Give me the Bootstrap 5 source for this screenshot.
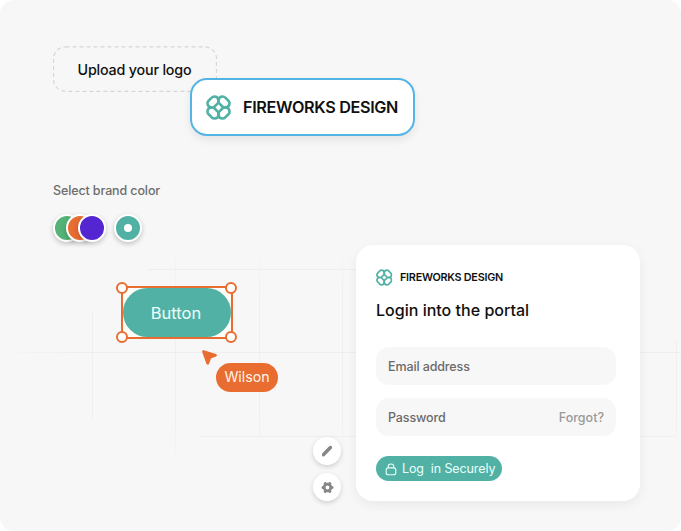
<!DOCTYPE html>
<html lang="en">
<head>
<meta charset="utf-8">
<meta name="viewport" content="width=device-width, initial-scale=1">
<title>Brand portal</title>
<link href="https://cdn.jsdelivr.net/npm/bootstrap@5.3.0/dist/css/bootstrap.min.css" rel="stylesheet">
<style>
  :root { --teal: #52b1a5; --orange: #e96c31; }
  body { font-family: Inter, "Liberation Sans", sans-serif; color: #101010; background: #fff; }
  .stage { width: 681px; height: 531px; background: #f7f7f7; border-radius: 14px; }
  .grid-lines { position: absolute; inset: 0; }
  .side { width: 303px; padding: 46px 0 0 53px; }
  .upload { width: 164px; height: 46px; }
  .upload-box { font-size: 14.3px; letter-spacing: -.18px; font-weight: 500; padding: 1px 1px 0 0; }
  .upload-box svg { position: absolute; inset: 0; }
  .brand-chip { position: absolute; left: 137px; top: 32px; width: 225px; height: 58px; border: 2px solid #54b4e6; border-radius: 17px; box-shadow: 0 4px 9px rgba(0,0,0,.08); padding-left: 14px; gap: 12px; font-size: 16.2px; letter-spacing: -.33px; font-weight: 600; }
  .pick-label { font-size: 12.5px; letter-spacing: -.12px; line-height: 18px; font-weight: 500; color: #6d6d6d; margin-top: 90px; }
  .swatches { margin-top: 14px; }
  .swatch { width: 28px; height: 28px; border: 2.5px solid #fff; border-radius: 50%; box-shadow: 0 2px 5px rgba(0,0,0,.22); }
  .swatch + .swatch { margin-left: -15.5px; }
  .swatch + .swatch.picked { margin-left: 8px; background: var(--teal); }
  .picked i { width: 8px; height: 8px; border-radius: 50%; background: #fff; }
  .node { position: absolute; }
  .frame { left: 121px; top: 286px; width: 112px; height: 53px; border: 2px solid var(--orange); background: #fcfdf6; }
  .frame .pill { height: 49px; border-radius: 25px; background: var(--teal); color: #effffc; font-size: 16.5px; padding: 2px 2px 0 0; }
  .handle { position: absolute; width: 12px; height: 12px; border: 2px solid var(--orange); border-radius: 50%; background: #fff; }
  .h-tl { left: -7px; top: -6px; } .h-tr { right: -6px; top: -6px; }
  .h-bl { left: -7px; bottom: -6px; } .h-br { right: -6px; bottom: -6px; }
  .cursor { left: 200px; top: 348px; }
  .user { left: 216px; top: 363px; width: 62px; height: 29px; border-radius: 15px; background: var(--orange); color: #fff5e6; font-size: 14.2px; padding-bottom: 1px; }
  .tools { left: 313px; top: 437px; gap: 8px; }
  .tool { width: 28px; height: 28px; border-radius: 50%; background: #fff; box-shadow: 0 2px 5px rgba(0,0,0,.16); color: #868686; }
  .login { width: 284px; height: 256px; border-radius: 17px; padding: 23px 24px 0 20px; margin: 0 41px 30px 0; box-shadow: 0 4px 12px rgba(0,0,0,.06); }
  .login-brand { gap: 7.5px; height: 18px; font-size: 10.8px; letter-spacing: -.25px; font-weight: 600; }
  .login-brand span { padding-top: 2px; }
  .login-title { font-size: 16.05px; line-height: 22px; font-weight: 500; margin: 13px 0 26px; }
  .field { height: 38px; border-radius: 13px; background: #f7f7f7; padding: 2px 12px 0; font-size: 12.5px; letter-spacing: -.12px; font-weight: 500; color: #6a6a6a; }
  .field + .field { margin-top: 13px; }
  .field a { color: #999; letter-spacing: 0; }
  .secure { width: 126px; height: 25px; border-radius: 13px; background: var(--teal); color: #eafffb; font-size: 12.5px; letter-spacing: -.1px; margin-top: 20px; padding: 1px 0 0 9px; gap: 5px; white-space: pre; }
</style>
</head>
<body>
<svg class="d-none">
  <symbol id="bloom" viewBox="0 0 24 24">
    <g fill="none" stroke="#52b1a5" stroke-width="2.500" stroke-linejoin="round">
      <path id="petal" d="M12 7.300 7.300 12H5Q1.400 11.600 1.400 8 1.400 6.600 2.500 5.500L5.500 2.500Q6.600 1.400 8 1.400 11.600 1.400 12 5Z"/>
      <use href="#petal" transform="rotate(90 12 12)"/>
      <use href="#petal" transform="rotate(180 12 12)"/>
      <use href="#petal" transform="rotate(270 12 12)"/>
    </g>
  </symbol>
</svg>
<main class="stage position-relative overflow-hidden d-flex justify-content-between align-items-end">
  <svg class="grid-lines" width="681" height="531" aria-hidden="true">
    <defs>
      <linearGradient id="fx" gradientUnits="userSpaceOnUse" x1="0" x2="681" y1="0" y2="0"><stop offset="0" stop-color="#eee" stop-opacity="0"/><stop offset=".12" stop-color="#eee"/><stop offset="1" stop-color="#eee"/></linearGradient>
      <linearGradient id="fy" gradientUnits="userSpaceOnUse" x1="0" x2="0" y1="240" y2="470"><stop offset="0" stop-color="#efefef" stop-opacity="0"/><stop offset=".25" stop-color="#efefef"/><stop offset=".75" stop-color="#efefef"/><stop offset="1" stop-color="#efefef" stop-opacity="0"/></linearGradient>
    </defs>
    <path d="M148 269.5H357M5 352.5H681M200 436.5H357M640 436.5H675" stroke="url(#fx)"/>
    <path d="M92.500 312V418M175.500 250V468M259.500 243V436M342.500 240V470M676.500 340V440" stroke="url(#fy)"/>
  </svg>

  <section class="side position-relative align-self-start">
    <div class="upload position-relative">
      <div class="upload-box h-100 d-flex align-items-center justify-content-center">
        <svg width="164" height="46"><rect x=".5" y=".8" width="163" height="44.500" rx="12" fill="none" stroke="#d6d6d6" stroke-width="1.200" stroke-dasharray="4 3"/></svg>
        <span>Upload your logo</span>
      </div>
      <div class="brand-chip bg-white d-flex align-items-center">
        <svg width="25" height="25"><use href="#bloom"/></svg>
        <span class="text-nowrap">FIREWORKS DESIGN</span>
      </div>
    </div>
    <div class="pick-label">Select brand color</div>
    <div class="swatches d-flex">
      <span class="swatch" style="background:#55b378"></span>
      <span class="swatch" style="background:#e96c31"></span>
      <span class="swatch" style="background:#5426d2"></span>
      <span class="swatch picked d-flex align-items-center justify-content-center"><i></i></span>
    </div>
  </section>

  <div class="node frame">
    <div class="pill d-flex align-items-center justify-content-center">Button</div>
    <span class="handle h-tl"></span><span class="handle h-tr"></span><span class="handle h-bl"></span><span class="handle h-br"></span>
  </div>
  <svg class="node cursor" width="18" height="18"><path d="M3.500 3.500 15.500 7.300 9.900 9.500 7.700 15.300Z" fill="#e96c31" stroke="#e96c31" stroke-width="2.800" stroke-linejoin="round"/></svg>
  <div class="node user d-flex align-items-center justify-content-center">Wilson</div>
  <div class="node tools d-flex flex-column">
    <span class="tool d-flex align-items-center justify-content-center">
      <svg width="12" height="12" viewBox="0 0 12 12" fill="none" stroke="currentColor" stroke-width="3.500" stroke-linecap="round" stroke-linejoin="round"><path d="M2.800 9.200 9.400 2.600"/><path d="M1.600 10.600V9.200L3 10.600Z" stroke-width="1"/></svg>
    </span>
    <span class="tool d-flex align-items-center justify-content-center">
      <svg width="13" height="13" viewBox="-6.500 -6.500 13 13"><g stroke="currentColor" stroke-width="3" stroke-linecap="round"><path d="M-4.500 0H4.500M-2.300-4 2.300 4M2.300-4-2.300 4"/></g><circle r="4.700" fill="currentColor"/><circle r="1.900" fill="#fff"/></svg>
    </span>
  </div>

  <section class="login bg-white position-relative">
    <div class="login-brand d-flex align-items-center">
      <svg width="16.500" height="17"><use href="#bloom"/></svg>
      <span>FIREWORKS DESIGN</span>
    </div>
    <h1 class="login-title">Login into the portal</h1>
    <div class="field d-flex align-items-center">Email address</div>
    <div class="field d-flex align-items-center justify-content-between"><span>Password</span><a class="text-decoration-none" href="#">Forgot?</a></div>
    <button class="secure border-0 d-flex align-items-center" type="button"><svg width="12" height="13" viewBox="0 0 12 13" fill="none" stroke="currentColor" stroke-width="1.100"><rect x="1.200" y="4.900" width="9.600" height="6.900" rx="2"/><path d="M3.200 4.800V3.700A2.800 2.700 0 0 1 8.800 3.700V4.800"/></svg><span>Log  in Securely</span></button>
  </section>
</main>
<script src="https://cdn.jsdelivr.net/npm/bootstrap@5.3.0/dist/js/bootstrap.bundle.min.js"></script>
</body>
</html>
